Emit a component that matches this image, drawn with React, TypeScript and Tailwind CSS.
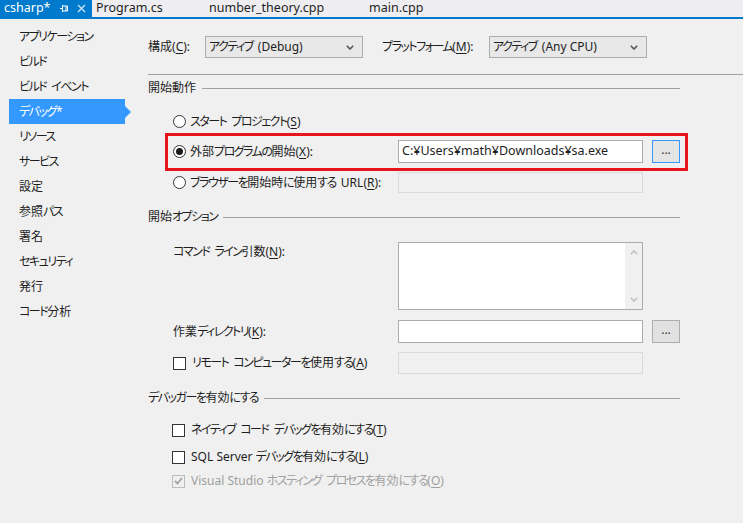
import React from 'react';

const sideItems = [
  'アプリケーション',
  'ビルド',
  'ビルド イベント',
  'デバッグ*',
  'リソース',
  'サービス',
  '設定',
  '参照パス',
  '署名',
  'セキュリティ',
  '発行',
  'コード分析',
];

const isKana = (p: string) => /[\u3040-\u30ff]/.test(p);

// kana in Meiryo UI are narrow, so squeeze kana runs only; a space after kana gets a fixed width
const T: React.FC<{ s: string }> = ({ s }) => {
  const parts = s.split(/([\u3040-\u30ff]+| )/).filter((p) => p !== '');
  return (
    <>
      {parts.map((part, i) => {
        if (part === ' ' && i > 0 && isKana(parts[i - 1]))
          return <span key={i} className="inline-block w-[5px]" />;
        if (isKana(part))
          return (
            <span key={i} className="tracking-[-1.5px]">
              {part}
            </span>
          );
        return <React.Fragment key={i}>{part}</React.Fragment>;
      })}
    </>
  );
};

// label with underlined access key
const L: React.FC<{ s: string; k: string; colon?: boolean }> = ({ s, k, colon }) => (
  <span>
    <T s={s} />(<span className="underline underline-offset-2">{k}</span>){colon ? ':' : ''}
  </span>
);

const Chevron: React.FC<{ up?: boolean; color?: string }> = ({ up, color = '#555' }) => (
  <svg width="8" height="5" viewBox="0 0 8 5" className={up ? 'rotate-180' : ''}>
    <path d="M0.8 0.8 L4 4 L7.2 0.8" fill="none" stroke={color} strokeWidth="1.6" />
  </svg>
);

const Select: React.FC<{ text: string }> = ({ text }) => (
  <div className="w-[158px] h-[22px] border border-[#acacac] bg-[#e8e8e8] flex items-center pl-[3px] pr-[8px]">
    <span className="flex-1">
      <T s={text} />
    </span>
    <Chevron />
  </div>
);

const Radio: React.FC<{ checked?: boolean }> = ({ checked }) => (
  <span className="w-[13px] h-[13px] rounded-full border border-[#333] bg-white flex items-center justify-center shrink-0">
    {checked && <span className="w-[7px] h-[7px] rounded-full bg-[#1a1a1a]" />}
  </span>
);

const Check: React.FC<{ checked?: boolean; disabled?: boolean }> = ({ checked, disabled }) => (
  <span
    className={
      'w-[13px] h-[13px] border shrink-0 flex items-center justify-center ' +
      (disabled ? 'border-[#bcbcbc] bg-[#f0f0f0]' : 'border-[#333] bg-white')
    }
  >
    {checked && (
      <svg width="9" height="8" viewBox="0 0 9 8">
        <path d="M1 4 L3.5 6.5 L8 1" fill="none" stroke="#a0a0a0" strokeWidth="1.8" />
      </svg>
    )}
  </span>
);

const Browse: React.FC<{ focused?: boolean }> = ({ focused }) => (
  <div
    className={
      'ml-[9px] w-[28px] h-[23px] border flex items-center justify-center text-[#333] leading-none pb-[3px] ' +
      (focused ? 'border-[#3399ff] bg-[#e5e5e5]' : 'border-[#adadad] bg-[#e1e1e1]')
    }
  >
    ...
  </div>
);

const Heading: React.FC<{ label: string; className?: string }> = ({ label, className = '' }) => (
  <div className={'flex items-center h-[16px] ' + className}>
    <span>
      <T s={label} />
    </span>
    <div className="flex-1 ml-[6px] mr-[8px] h-px bg-[#a0a0a0]" />
  </div>
);

export default function App() {
  return (
    <div className="w-[743px] h-[523px] overflow-hidden bg-[#f0f0f0] text-[12px] text-[#1e1e1e] font-['Noto_Sans','Noto_Sans_CJK_JP',sans-serif] [font-feature-settings:'palt']">
      {/* document tabs */}
      <div className="h-[17px] bg-[#eeeef2] flex items-center text-[12.5px] leading-none">
        <div className="w-[92px] h-full bg-[#007acc] text-white flex items-center pl-[4px]">
          <span className="w-[56px]">csharp*</span>
          <svg width="9" height="9" viewBox="0 0 9 9">
            <path d="M0 4.5 H2.5 M2.5 1 V8 M2.5 2 H7.5 V7 H2.5 M6 2 V7" fill="none" stroke="#fff" strokeWidth="1" />
          </svg>
          <svg width="9" height="9" viewBox="0 0 9 9" className="ml-[8px]">
            <path d="M1 1 L8 8 M8 1 L1 8" fill="none" stroke="#d0e4f5" strokeWidth="1.3" />
          </svg>
        </div>
        <div className="w-[117px] pl-[4px]">Program.cs</div>
        <div className="w-[160px]">number_theory.cpp</div>
        <div>main.cpp</div>
      </div>
      <div className="h-[2px] bg-[#007acc]" />

      <div className="flex">
        {/* left nav */}
        <div className="w-[131px] pt-[5px] shrink-0">
          {sideItems.map((s) => {
            const sel = s === 'デバッグ*';
            return (
              <div key={s} className="h-[25px] flex items-center">
                <div
                  className={
                    'ml-[9px] w-[116px] h-full flex items-center pl-[10px] ' +
                    (sel ? 'bg-[#3399ff] text-white' : '')
                  }
                >
                  <span>
                    <T s={s} />
                  </span>
                </div>
                {sel && (
                  <div className="w-0 h-0 border-y-[6px] border-y-transparent border-l-[6px] border-l-[#3399ff]" />
                )}
              </div>
            );
          })}
        </div>

        {/* settings */}
        <div className="flex-1 pl-[17px] pt-[17px]">
          <div className="flex items-center h-[22px]">
            <span className="w-[57px]">
              <L s="構成" k="C" colon />
            </span>
            <Select text="アクティブ (Debug)" />
            <span className="ml-[19px] w-[107px]">
              <L s="プラットフォーム" k="M" colon />
            </span>
            <Select text="アクティブ (Any CPU)" />
          </div>
          <div className="mt-[16px] h-px bg-[#a0a0a0]" />

          <div className="w-[540px]">
            <Heading label="開始動作" className="mt-[5px]" />

            <div className="mt-[14px] h-[23px] flex items-center pl-[25px] gap-[4px]">
              <Radio />
              <L s="スタート プロジェクト" k="S" />
            </div>

            <div className="ml-[17px] border-[3px] border-[#e8141c] pt-[4px] pb-[5px] pl-[5px] pr-[5px] flex items-center">
              <div className="flex-1 flex items-center gap-[4px]">
                <Radio checked />
                <L s="外部プログラムの開始" k="X" colon />
              </div>
              <div className="w-[245px] h-[23px] border border-[#acacac] bg-white flex items-center pl-[3px] text-[12.5px]">
                C:¥Users¥math¥Downloads¥sa.exe
              </div>
              <Browse focused />
            </div>

            <div className="h-[23px] flex items-center pl-[25px] pr-[8px]">
              <div className="flex-1 flex items-center gap-[4px]">
                <Radio />
                <L s="ブラウザーを開始時に使用する URL" k="R" colon />
              </div>
              <div className="w-[245px] h-[21px] border border-[#dadada] bg-[#f0f0f0]" />
              <div className="w-[37px]" />
            </div>

            <Heading label="開始オプション" className="mt-[15px]" />

            <div className="mt-[17px] flex pl-[25px] pr-[8px]">
              <div className="flex-1 pt-[1px]">
                <L s="コマンド ライン引数" k="N" colon />
              </div>
              <div className="w-[245px] h-[68px] border border-[#acacac] bg-white flex justify-end">
                <div className="w-[17px] h-full bg-[#f0f0f0] flex flex-col items-center justify-between py-[7px]">
                  <Chevron up color="#c2c2c2" />
                  <Chevron color="#c2c2c2" />
                </div>
              </div>
              <div className="w-[37px]" />
            </div>

            <div className="mt-[10px] h-[23px] flex items-center pl-[25px] pr-[8px]">
              <div className="flex-1">
                <L s="作業ディレクトリ" k="K" colon />
              </div>
              <div className="w-[245px] h-[23px] border border-[#acacac] bg-white" />
              <Browse />
            </div>

            <div className="mt-[9px] h-[22px] flex items-center pl-[25px] pr-[8px]">
              <div className="flex-1 flex items-center gap-[6px]">
                <Check />
                <L s="リモート コンピューターを使用する" k="A" />
              </div>
              <div className="w-[245px] h-[22px] border border-[#dadada] bg-[#f0f0f0]" />
              <div className="w-[37px]" />
            </div>

            <Heading label="デバッガーを有効にする" className="mt-[16px]" />

            <div className="mt-[14px] h-[20px] flex items-center pl-[24px] gap-[6px]">
              <Check />
              <L s="ネイティブ コード デバッグを有効にする" k="T" />
            </div>
            <div className="mt-[7px] h-[20px] flex items-center pl-[24px] gap-[6px]">
              <Check />
              <L s="SQL Server デバッグを有効にする" k="L" />
            </div>
            <div className="mt-[4px] h-[20px] flex items-center pl-[24px] gap-[6px] text-[#a0a0a0]">
              <Check checked disabled />
              <L s="Visual Studio ホスティング プロセスを有効にする" k="O" />
            </div>
          </div>
        </div>
      </div>
    </div>
  );
}
